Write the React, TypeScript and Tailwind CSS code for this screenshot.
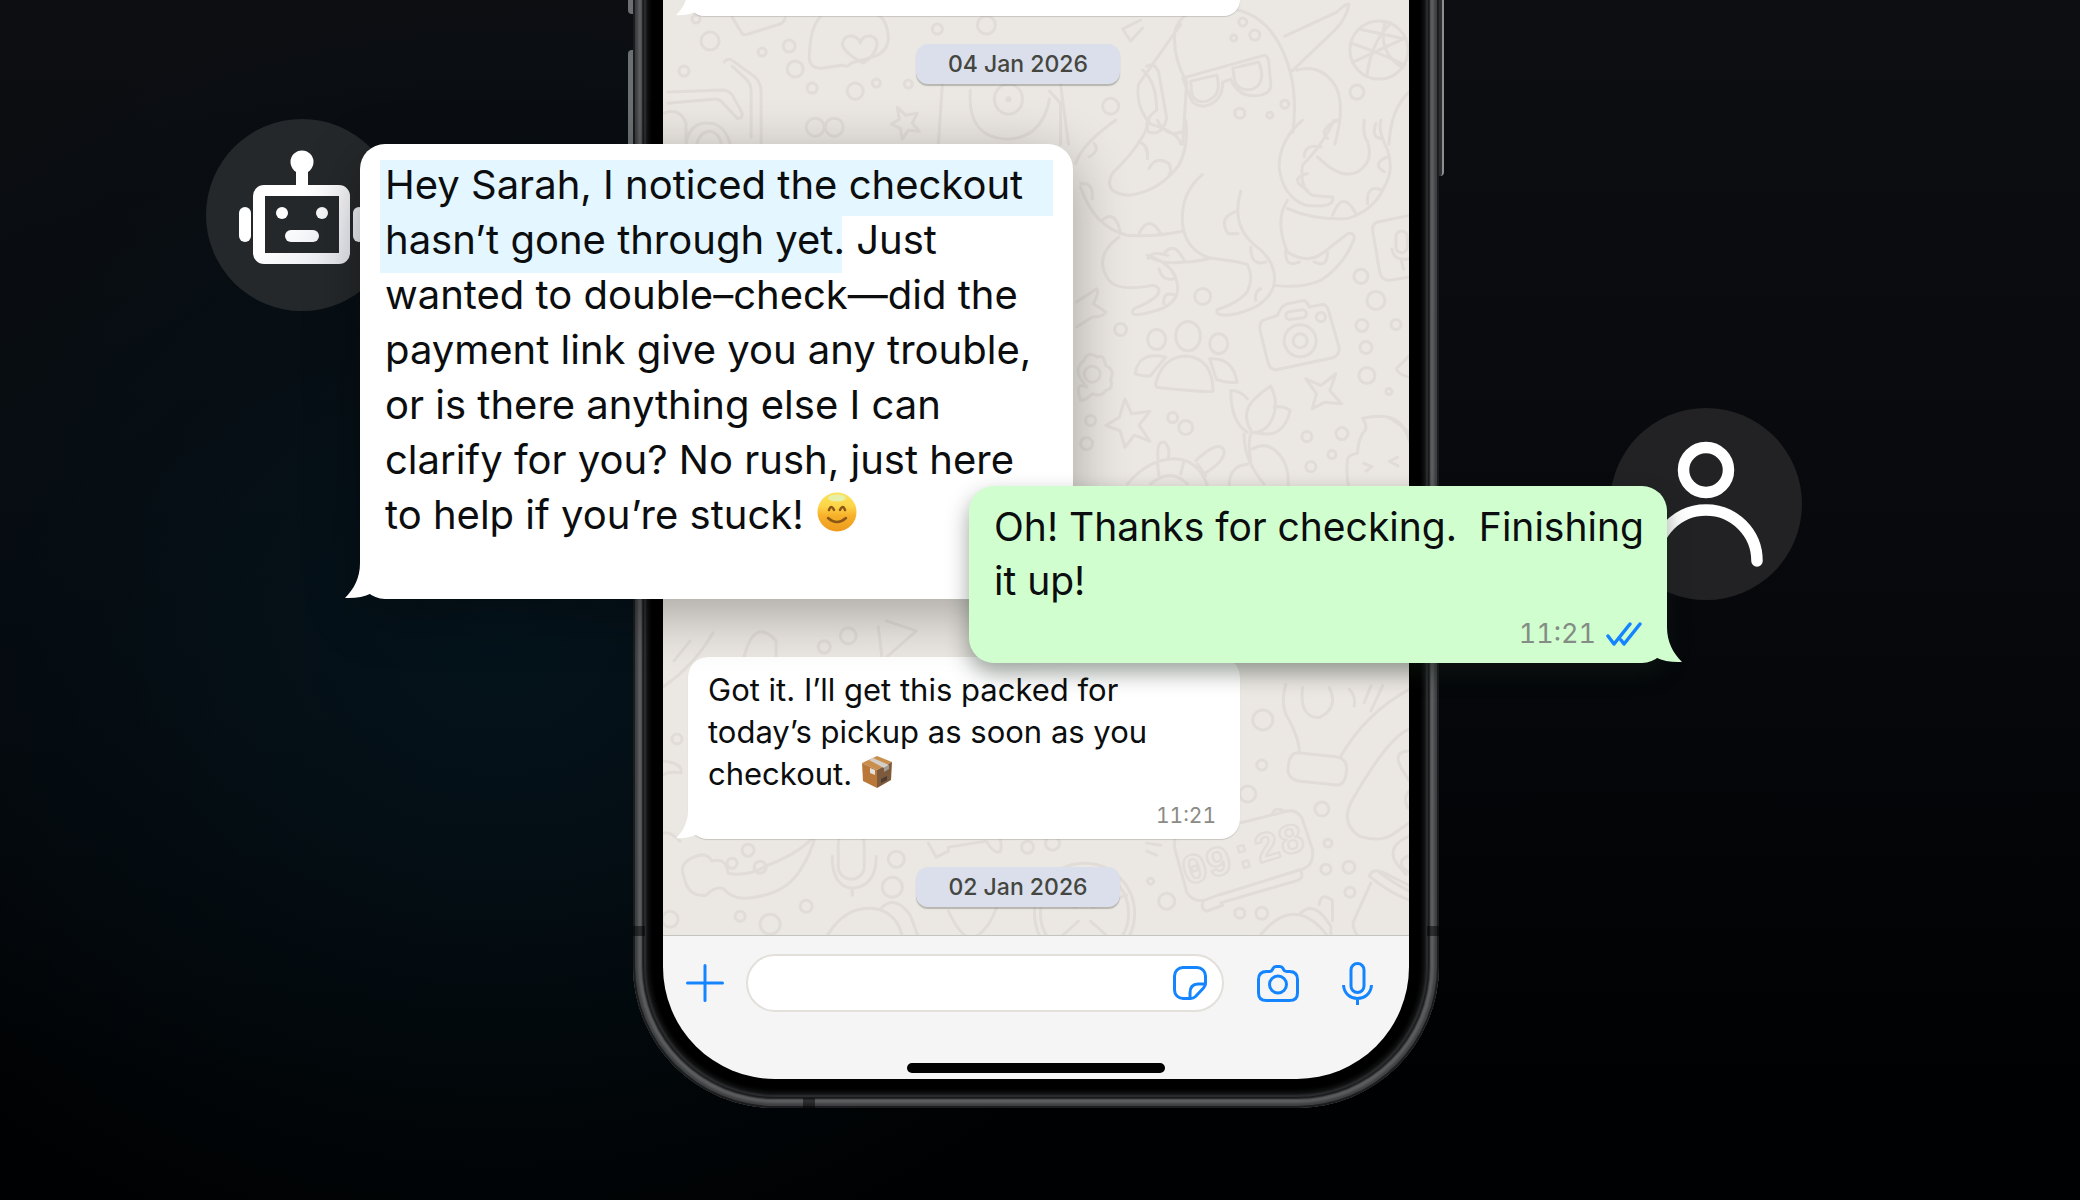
import type { ReactNode } from "react";
import { clsx } from "clsx";

/** Faint doodle wallpaper behind the conversation. */
function Wallpaper() {
  return (
    <svg
      className="absolute inset-0 h-full w-full"
      viewBox="663 0 745 936"
      preserveAspectRatio="xMidYMin slice"
      fill="none"
      stroke="#e1dcd7"
      strokeWidth="3"
      strokeLinecap="round"
      strokeLinejoin="round"
      aria-hidden="true"
    >
      {/* top strip: bunting, cup, glasses, basketball, snake */}
      <g>
        <path d="M732 17l9 15q2 4 7 2l32-10q4-2 5-6M820 17q-10 10-11 40q0 12 14 11l20-3q4 3 8-2l24-7q14-6 13-20q-2-18-12-22" />
        <path d="M863 63q-18-9-21-18q1-10 10-9q7 2 8 7q2-8 11-7q8 3 5 12q-3 9-13 15Z" />
        <path d="M724 62q4-5 9-1l22 16q6 6 6 15v52M732 66l14 13q5 5 5 12v46M668 92l54-2q8 0 12 8l8 15q1 6-5 5l-14-15q-4-5-10-4l-45 4" />
        <path d="M664 113q16-6 22 10v20M686 143q4-22 24-20q14 1 20 20M697 143q3-12 14-12q8 2 10 12" />
        <path d="M897 107l8 8 12-2-5 10 7 8-11-1-6 9-2-11-9-4 8-5ZM942 84l-4 60M970 90q-4 48 38 49q34-2 41-40M1060 84l8 60M1049 91l11 12v41" />
        <ellipse cx="1008" cy="99" rx="14" ry="15" />
        <circle cx="1008" cy="99" r="1.5" />
        <path d="M1180 24l-42 60q-4 22 12 40 28 8 30 20M1212 8q-32 0-38 24-2 26 12 50l-4 62M1212 8q60-4 78 66 6 26 2 58M1140 20l-18 9 8 12 12-13" />
        <path d="M1182 78l82-23q4 2 4 8l2 22q0 8-10 10-22 4-30-16l-8 3q0 20-18 24-12 0-14-8Z" />
        <path d="M1190 81l26-6q6 20-10 26-12 3-15-8ZM1232 68l26-6q8 20-6 27-14 3-18-8Z" />
        <path d="M1284 36l52-24q8-8 12-8-2 14-14 26l-44 42M1296 70q22-6 36 12 14 18 2 62M1408 92q-18 16-20 52M1142 70q14 12 14 40-14 10-8 22 14 4 18-14l-8-46q-4-10-12-6" />
        <circle cx="1378" cy="50" r="29" />
        <path d="M1350 43q30 10 54 22M1358 29q28 6 46 10M1366 76q4-34 24-53M1384 22q-8 30 18 46M1352 62l52-24" />
      </g>

      {/* right of the large message */}
      <g transform="translate(1060 120) scale(.3333)" strokeWidth="9">
        <path d="M265 0q-10 60-110 160-30 60 50 65 90-10 150-90 30-60 20-135M290 0q30 60 85 30M45 130q20-60 120-130M60 200q40 120 140 145 80 6 165-12" />
        <path d="M235 65q30 10 25 50M265 145q20-40 60-15 10 20 0 35M100 70q20 20-15 40M60 190q40-5 35 45M125 300q40-35 55 40M235 340q30-60 65 0" />
        <path d="M425 163q-60 50-60 130 0 90 80 120 90 10 115 20 20 40 0 80-20 30-90 55-10 20 40 15 110-20 130-90 10-70-60-120-70-60-40-160M522 275q-50 20-20 65h30M570 380q0 60 45 45M600 505q-20 10-15 35" />
        <path d="M175 350q-80 60-30 130 30 35 130 15 30 5 15 30-20 20-70 40-20 30 50 10 90-20 80-85-10-60-90-85 40 30 110 20 40 0 80-12M262 415q10-25 60-10M310 400q30-40 60 20M295 445q10 40 45 30M310 550q-5-40 35-25" />
        <path d="M725 0q-70 60-70 140 10 90 80 115 90 10 80-25-20 0-60-5-40-20-30-90 60-60 95-135M770 110q70 70 120 45 50-30 30-90-15-20-10-65M960 0q-10 30 20 90 20 60-10 110-30 70-110 95-100 5-180-30M680 240q-40 60 0 155 60 40 110 0l70-55q20-5 20 15-30 80-100 125-60 25-140 15M730 110q0-40 50-30M740 160q-60 15 0 50M815 285q30-80 70-5M920 250q-5-60 45-40M980 110q-50 20-10 45M945 10q-15 40 15 45M830 0q-60 30-30 55M675 385q-5 60 40 40M760 425q40 20 40-30" />
        <path d="M1046 285l-95 20q-20 5-15 30l20 120q5 25 30 25l60-10" />
        <rect x="1005" y="332" width="34" height="65" rx="17" />
        <path d="M993 385q5 40 50 30M1020 417l8 30" />
        <path d="M605 600l45-15q10-30 30-35l50-10q10 5 15 20l40-8q15 0 20 25l30 105q0 25-20 30l-165 35q-20 5-28-20l-25-100q0-20 8-27Z" />
        <circle cx="718" cy="661" r="48" />
        <circle cx="718" cy="661" r="21" />
        <circle cx="780" cy="590" r="14" />
        <rect x="675" y="571" width="62" height="24" rx="12" transform="rotate(-8 706 583)" />
        <ellipse cx="382" cy="647" rx="37" ry="44" />
        <ellipse cx="288" cy="657" rx="27" ry="30" />
        <ellipse cx="474" cy="670" rx="27" ry="30" />
        <path d="M285 790q20-80 90-83 80 5 82 105-10 5-160-10-15-3-12-12ZM315 710q-80-20-92 50 30 10 47 5zM447 715q70-5 82 70-30 5-62-8z" />
        <path d="M60 840q-20-60 20-40-50-50-10-80 10-30 40-10 20-10 25 25 30 15 15 40 10 30-15 35-10 20-40 10-20 20-35 20" />
        <circle cx="95" cy="761" r="24" />
        <path d="M193 835l20 45 55-8-33 42 33 48-47-18-28 36-15-50-42-15 40-25ZM48 545l60-40q10 10-10 45l38 25q-10 15-40 15L48 620" />
        <path d="M735 775l45 20 45-35-18 50 35 40-50-5-38 20 13-45Z" />
        <path d="M560 935q-50-30-50-125 30 0 50 25M630 797q30 60-5 115-20 25-50 25-40-60 10-105 20-20 45-35ZM640 860q30-5 48 10-20 90-105 65M550 940q0 50 20 90 20 40 40 60M570 940q-10 30 0 80M505 1096q0-60 55-65M575 985q50-30 90 30 20 30 17 80" />
        <path d="M200 1090q60-70 130-75 80-5 110 80M270 1090q60-50 110 0M290 1025l5 40M370 1020l-10 40M410 1030l25 35M292 1015q-5-55 20-50 20 20 10 50M405 1020q70-65 85-30 5 30-60 70" />
        <path d="M905 893q90-20 120 25 20 30 25 60M905 893q20 30 0 45-15 30-15 60-30 5-30 20-5 40 3 78M980 890q40 20 66 50M908 1028l25 10-18 14M1010 1010l-25 12 26 14M1046 705l-40 40q10 20 40 25" />
      </g>

      {/* behind and beside the lower reply */}
      <g transform="translate(1220 600) scale(.3333)" strokeWidth="9">
        <path d="M195 250q-15 50 0 90 40 70 40 110M245 260q-10 90 50 90 60-30 30-90M385 265q20 20 15 50M430 305l20-50M450 330l35-75M565 265q-130 70-205 200" />
        <path d="M230 455l115 12q35 5 32 40-3 45-30 45l-115-12q-35-10-30-40 3-45 28-45ZM565 385q-60 20-170 210-40 70 20 110 60 20 100-5l50-35M565 450q-50 0-25 50l25 40M565 570q-20 20-5 50M565 705q-70 30-40 80l30 35M560 765q-40 20 5 50" />
        <path d="M60 665l140-35q30-5 45 25l30 90q5 45-25 57L0 880M240 810q10 20-10 28L0 905M155 638q5-20 32-10" />
        <path d="M445 825q10-25 40-12l80 40M445 825q60 50 120 72M475 815q50 35 90 55M450 845l-50 110q-10 20 10 48M120 1000q90-110 180-20l18 22M240 935q40-40 90 40v27M295 910q5-40 40-12v60" />
      </g>
      <g transform="translate(1246 866) rotate(-17)">
        <text
          x="0"
          y="0"
          textAnchor="middle"
          fill="#ebe7e2"
          className="font-['Liberation_Mono',monospace] text-[42px] font-bold"
          strokeWidth="2"
        >
          09:28
        </text>
      </g>

      {/* strip under the lower reply */}
      <g>
        <path d="M1222 821l-40 10q-10 4-8 16l12 44q6 10 18 8l16-6M1202 902q-2 6 4 8l16-6M663 686q30-20 50-54M674 660l16-20M744 656q10-40 32-16v18M878 626l4 34 34-30-30-10" />
        <path d="M684 876q-6-14 10-20 12-6 18 4 14-4 16 12 20 4 40-8 36-14 50-34l-20-4M684 876q4 20 22 18 10-10 18-6 10 12 30 8 30-4 44-24 14-20 18-42" />
        <rect x="838" y="830" width="26" height="48" rx="13" />
        <path d="M832 855q0 30 20 32 24-2 24-32M852 888v6M928 842l8 14 12-6v-4l38-6q8 14 14 10 2-8-2-18M680 840q-10-10-16-8M663 760q20 2 18 12-12-2-18 2" />
        <circle cx="1084" cy="912" r="50" />
        <circle cx="1084" cy="912" r="44" />
        <path d="M1080 898l-20-28M1088 898l12-32M1092 906l34-12M1076 906l-34-10M1078 920l-18 16M1090 920l18 16M826 936q20-34 52-28 20 6 24 28M880 908q14-16 30 6l8 22M948 910q14 30 26 26 16-8 24-36M1146 842l14 2M1146 850l10 4" />
      </g>

      {/* scattered dots */}
      <g>
        {DOTS.map(([cx, cy, r]) => (
          <circle key={`${cx}-${cy}`} cx={cx} cy={cy} r={r} />
        ))}
      </g>
    </svg>
  );
}

const DOTS = [
  [696, 19, 4], [710, 41, 9], [762, 52, 4], [789, 46, 6], [684, 71, 5], [795, 69, 8],
  [812, 88, 5], [855, 91, 8], [876, 83, 4], [908, 84, 4], [937, 29, 5], [986, 25, 9],
  [1110, 106, 8], [1242, 22, 4], [1254, 35, 5], [1233, 38, 3], [1356, 92, 7], [1239, 113, 5],
  [1269, 115, 3], [1284, 104, 4], [815, 127, 9], [834, 127, 9], [1202, 296, 8], [1120, 329, 6],
  [1360, 276, 7], [1375, 300, 9], [1361, 325, 6], [1395, 324, 5], [1365, 347, 6], [1366, 375, 8],
  [1388, 391, 3], [1172, 417, 5], [1185, 427, 7], [1306, 436, 5], [1341, 433, 6], [1331, 454, 4],
  [1310, 466, 5], [1090, 420, 5], [1086, 443, 6], [1262, 719, 10], [1261, 764, 5], [1247, 793, 8],
  [1321, 808, 7], [1327, 842, 4], [1325, 868, 5], [1348, 866, 6], [1349, 891, 5], [1239, 912, 5],
  [1261, 912, 6], [848, 635, 8], [824, 646, 6], [677, 738, 5], [748, 849, 6], [732, 862, 5],
  [760, 866, 6], [896, 858, 8], [892, 886, 10], [806, 905, 6], [740, 915, 5], [770, 923, 10],
  [670, 918, 8], [1027, 846, 6], [1052, 842, 7], [1150, 880, 3], [1166, 900, 8],
];

/** Small curl that hangs off the lower corner of a bubble. */
function Tail({ side, className }: { side: "left" | "right"; className: string }) {
  return (
    <svg
      className={clsx("absolute bottom-0", side === "right" && "-scale-x-100", className)}
      viewBox="0 0 40 40"
      fill="currentColor"
      aria-hidden="true"
    >
      <path d="M15 4C15 19 9 30 0 39C10 39.500 19 38 26 34.500L40 15L30 4Z" />
    </svg>
  );
}

function DatePill({ children }: { children: ReactNode }) {
  return (
    <time className="relative mt-7 mr-9 self-center rounded-xl bg-[#dadfeb] px-8 text-[23px] leading-10 font-medium text-[#44463f] shadow-[0_2px_1px_rgba(90,95,85,0.35)]">
      {children}
    </time>
  );
}

function Avatar({ className, children }: { className: string; children: ReactNode }) {
  return (
    <div className={clsx("absolute size-48 overflow-hidden rounded-full", className)}>
      <svg viewBox="0 0 192 192" className="size-full" fill="none" aria-hidden="true">
        {children}
      </svg>
    </div>
  );
}

function RobotAvatar() {
  return (
    <Avatar className="-top-[25px] -left-[154px] bg-[#25282a]">
      <defs>
        <linearGradient id="robot" x1="60" y1="60" x2="160" y2="150" gradientUnits="userSpaceOnUse">
          <stop offset="0.3" stopColor="#fff" />
          <stop offset="1" stopColor="#dfe1ea" />
        </linearGradient>
      </defs>
      <g fill="url(#robot)">
        <circle cx="96" cy="43" r="11.500" />
        <path d="M90 50h12v18H90z" />
        <path
          fillRule="evenodd"
          d="M58 66h75a11 11 0 0 1 11 11v57a11 11 0 0 1-11 11H58a11 11 0 0 1-11-11V77a11 11 0 0 1 11-11ZM59 77v57h74V77Z"
        />
        <rect x="33" y="88" width="12" height="35" rx="6" />
        <rect x="147" y="88" width="12" height="35" rx="6" />
        <circle cx="76" cy="94" r="6" />
        <circle cx="116" cy="94" r="6" />
        <rect x="79" y="111" width="34" height="12" rx="6" />
      </g>
    </Avatar>
  );
}

function PersonAvatar() {
  return (
    <Avatar className="-top-[78px] -right-[135px] bg-[#222224]">
      <g stroke="#fff" strokeWidth="11.500" strokeLinecap="round">
        <circle cx="96" cy="62" r="22.500" />
        <path d="M45 153a51 51 0 0 1 102 0" />
      </g>
    </Avatar>
  );
}

function SmileEmoji() {
  return (
    <svg className="ml-0.5 inline-block size-10 align-[-3px]" viewBox="0 0 40 40" role="img" aria-label="smiling face">
      <defs>
        <linearGradient id="face" x1="0" y1="0" x2="0" y2="1">
          <stop offset="0" stopColor="#fbe35c" />
          <stop offset="0.35" stopColor="#fdd548" />
          <stop offset="0.6" stopColor="#f7b02a" />
          <stop offset="1" stopColor="#ee9a1c" />
        </linearGradient>
      </defs>
      <circle cx="20" cy="20" r="19.500" fill="url(#face)" />
      <ellipse cx="20" cy="6" rx="9" ry="3.500" fill="#e6f0a8" />
      <g fill="none" stroke="#8a5716" strokeWidth="2.500" strokeLinecap="round">
        <path d="M12 18q2-6 5 0M23 18q3-6 5 0" />
        <path d="M11 26q9 8 18 0" />
      </g>
    </svg>
  );
}

function PackageEmoji() {
  return (
    <svg className="inline-block size-8 align-[-3px]" viewBox="0 0 32 32" role="img" aria-label="package">
      <path d="M1 7L16 0l15 6-15 8Z" fill="#c98d4c" />
      <path d="M1 7l15 7v18L2 25Z" fill="#b9783a" />
      <path d="M31 6l-15 8v18l14-8Z" fill="#7d5a3c" />
      <path d="M8 4l4-2 16 7-5 3Z" fill="#d3cfc8" />
      <path d="M23 12l5-3v4l-5 3Z" fill="#a39b92" />
      <path d="M9 12l5 2v5l-5-2Z" fill="#e4e0da" />
      <path d="M20 23l6-3v4l-6 3Z" fill="#4d3c31" />
    </svg>
  );
}

function ReadTicks() {
  return (
    <svg
      className="h-6 w-9"
      viewBox="0 0 36 24"
      fill="none"
      stroke="#1485ff"
      strokeWidth="3.500"
      strokeLinecap="round"
      strokeLinejoin="round"
      role="img"
      aria-label="Read"
    >
      <path d="M2 14l6 8L24 2M15 18l3 4L34 2" />
    </svg>
  );
}

function IconButton({ label, className, children }: { label: string; className: string; children: ReactNode }) {
  return (
    <button type="button" aria-label={label} className={clsx("shrink-0 text-[#1485ff]", className)}>
      {children}
    </button>
  );
}

const iconProps = {
  fill: "none",
  stroke: "currentColor",
  strokeWidth: 3,
  strokeLinecap: "round",
  strokeLinejoin: "round",
  "aria-hidden": true,
} as const;

function Composer() {
  return (
    <footer className="relative flex flex-col items-center rounded-b-[112px] border-t border-[#c4c4c0] bg-[#f5f5f5] pb-1.5">
      <form className="flex w-full items-center pt-[18px] pr-[35px] pl-[23px]" onSubmit={(e) => e.preventDefault()}>
        <IconButton label="Attach" className="mr-[22px]">
          <svg className="size-[38px]" viewBox="0 0 38 38" {...iconProps}>
            <path d="M19 1.500v35M1.500 19h35" />
          </svg>
        </IconButton>
        <div className="relative flex-1">
          <input
            type="text"
            aria-label="Message"
            className="h-[58px] w-full rounded-full border-2 border-[#e3e0dc] bg-white pr-16 pl-6 text-[32px] outline-none"
          />
          <IconButton label="Stickers" className="absolute top-3 right-[17px]">
            <svg className="size-[34px]" viewBox="0 0 34 34" {...iconProps}>
              <path d="M10 1.500h14a8.500 8.500 0 0 1 8.500 8.500v7q0 3-2 5l-8 8.500q-2 2-5 2H10A8.500 8.500 0 0 1 1.500 24V10A8.500 8.500 0 0 1 10 1.500Z" />
              <path d="M17 32v-5q0-9 8-9h7" />
            </svg>
          </IconButton>
        </div>
        <IconButton label="Camera" className="ml-[33px]">
          <svg className="h-[37px] w-[42px]" viewBox="0 0 42 37" {...iconProps}>
            <path d="M9.500 6.500h3q2 0 3-2l.5-1q1-2 3-2h4q2 0 3 2l.5 1q1 2 3 2h3q8 0 8 8V28q0 7.500-8 7.500H9.500q-8 0-8-7.500V14.500q0-8 8-8Z" />
            <circle cx="21" cy="19.500" r="8.500" />
          </svg>
        </IconButton>
        <IconButton label="Record voice message" className="ml-[43px]">
          <svg className="h-[43px] w-8" viewBox="0 0 32 43" {...iconProps} strokeLinecap="butt">
            <rect x="9" y="1.500" width="13" height="29" rx="6.500" />
            <path d="M1.500 23c1 18 27 18 28 0M15.500 36.500v6.500" />
          </svg>
        </IconButton>
      </form>
      <span className="mt-[51px] h-2.5 w-[258px] rounded-full bg-black" />
    </footer>
  );
}

function Phone({ children }: { children: ReactNode }) {
  return (
    <div className="relative w-[806px]">
      {/* side buttons */}
      <span className="absolute top-0 -left-[5px] h-3.5 w-2 rounded-bl bg-[#6d7072]" />
      <span className="absolute top-[50px] -left-[5px] h-[210px] w-2 rounded-l bg-[#6d7072]" />
      <span className="absolute top-0 -right-[5px] h-44 w-2 rounded-br border-r-2 border-[#8d9090] bg-[#2c2e30]" />
      {/* the body runs on past the top edge of the page */}
      <div className="relative -mt-6 rounded-b-[142px] bg-black px-[30px] pt-6 pb-[29px] shadow-[inset_0_0_0_2px_#1b1c1d,inset_0_0_3px_5px_#3c3e40,inset_0_0_2px_9px_#606264,inset_0_0_1px_11px_#151617,inset_0_0_2px_13px_#303133,inset_0_0_4px_16px_#161718]">
        <span className="absolute top-[950px] left-0 h-2.5 w-3 bg-black/50" />
        <span className="absolute top-[950px] right-0 h-2.5 w-3 bg-black/50" />
        <span className="absolute bottom-0 left-[170px] h-2.5 w-3 bg-black/50" />
        {children}
      </div>
    </div>
  );
}

export default function App() {
  return (
    <main className="flex min-h-screen justify-center overflow-hidden bg-[#05070b] bg-[radial-gradient(ellipse_760px_640px_at_500px_640px,#04131b_0%,transparent_100%),linear-gradient(to_bottom,#0c0e12_0%,#07090d_45%,#000102_90%)] pr-2 pb-[91px] font-['Inter','Liberation_Sans',sans-serif] text-[#0b0d0e]">
      <Phone>
        <section className="relative isolate flex flex-col bg-[#ebe7e2] pb-7" aria-label="Conversation">
          <Wallpaper />

          <div className="relative ml-[25px] h-4 w-[552px] rounded-b-[20px] bg-white text-white shadow-[0_1px_1px_rgba(0,0,0,0.15)]">
            <Tail side="left" className="-left-3 h-8 w-8" />
          </div>

          <DatePill>04 Jan 2026</DatePill>

          <article className="relative z-10 mt-[60px] -ml-[303px] w-[713px]">
            <RobotAvatar />
            <div className="relative h-[455px] rounded-[25px] bg-white px-[25px] pt-[13px] shadow-[0_14px_56px_rgba(0,0,0,0.3)]">
              <span className="absolute bottom-0 left-0 text-white">
                <Tail side="left" className="-left-[15px] size-10" />
              </span>
              <span className="absolute top-4 right-5 left-5 h-14 bg-[#e4f6ff]" />
              <span className="absolute top-[71px] left-5 h-[58px] w-[462px] bg-[#e4f6ff]" />
              <p className="relative text-[40px] leading-[55px] whitespace-nowrap">
                Hey Sarah, I noticed the checkout
                <br />
                hasn’t gone through yet. Just
                <br />
                wanted to double–check—did the
                <br />
                payment link give you any trouble,
                <br />
                or is there anything else I can
                <br />
                clarify for you? No rush, just here
                <br />
                to help if you’re stuck! <SmileEmoji />
              </p>
            </div>
          </article>

          <article className="relative z-20 -mt-[113px] -mr-[258px] w-[698px] self-end">
            <PersonAvatar />
            <div className="relative rounded-[25px] bg-[#d0fecf] px-[25px] pt-3.5 pb-1 shadow-[0_10px_22px_rgba(20,35,25,0.42)]">
              <span className="absolute right-0 bottom-0 text-[#d0fecf]">
                <Tail side="right" className="-right-[15px] size-10" />
              </span>
              <p className="text-[39px] leading-[54px] whitespace-pre">{"Oh! Thanks for checking.  Finishing\nit up!"}</p>
              <div className="flex items-center justify-end gap-2.5 text-[27px] leading-[51px] text-[#858c85]">
                <time className="tabular-nums">11:21</time>
                <ReadTicks />
              </div>
            </div>
          </article>

          <article className="relative -mt-1.5 ml-[25px] w-[552px] rounded-[20px] bg-white px-5 pt-3 pb-1.5 shadow-[0_1px_1px_rgba(0,0,0,0.15)]">
            <span className="absolute bottom-0 left-0 text-white">
              <Tail side="left" className="-left-3 size-8" />
            </span>
            <p className="text-[31px] leading-[42px] whitespace-nowrap">
              Got it. I’ll get this packed for
              <br />
              today’s pickup as soon as you
              <br />
              checkout. <PackageEmoji />
            </p>
            <div className="pt-1 pr-1 text-right text-[21px] leading-[34px] text-[#8b8b85]">
              <time className="tabular-nums">11:21</time>
            </div>
          </article>

          <DatePill>02 Jan 2026</DatePill>
        </section>

        <Composer />
      </Phone>
    </main>
  );
}
